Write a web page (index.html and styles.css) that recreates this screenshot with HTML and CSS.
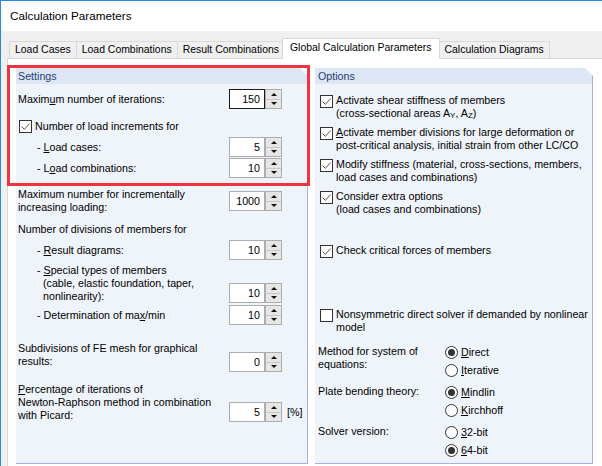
FILE: index.html
```html
<!DOCTYPE html>
<html>
<head>
<meta charset="utf-8">
<link rel="stylesheet" href="styles.css">
</head>
<body>
<div class="window">
  <div class="titlebar">Calculation Parameters</div>
  <div class="dialog">
    <div class="tabs">
      <div class="tab">Load Cases</div>
      <div class="tab">Load Combinations</div>
      <div class="tab">Result Combinations</div>
      <div class="tab active">Global Calculation Parameters</div>
      <div class="tab">Calculation Diagrams</div>
    </div>
    <div class="page">
      <section class="panel panel-settings">
        <div class="panel-head">Settings</div>
        <div class="panel-body">
          <div class="row mt5">
            <span class="label">Maxim<u>u</u>m number of iterations:</span>
            <span class="spin"><span class="spin-val focus">150</span><span class="spin-btn"><i class="up"></i><i class="down"></i></span></span>
          </div>
          <div class="check-row mt11">
            <svg class="cb" viewBox="0 0 13 13"><rect x="0.5" y="0.5" width="12" height="12" fill="#fff" stroke="#333"/><path d="M2.5 6.5l2.8 2.9 5.2-5.8" fill="none" stroke="#555" stroke-width="1"/></svg>
            <span>Number of load increments for</span>
          </div>
          <div class="row mt4">
            <span class="label sub">- <u>L</u>oad cases:</span>
            <span class="spin"><span class="spin-val">5</span><span class="spin-btn"><i class="up"></i><i class="down"></i></span></span>
          </div>
          <div class="row mt1">
            <span class="label sub">- L<u>o</u>ad combinations:</span>
            <span class="spin"><span class="spin-val">10</span><span class="spin-btn"><i class="up"></i><i class="down"></i></span></span>
          </div>
          <div class="row mt10">
            <span class="label">Maximum number for incrementally<br>increasing loading:</span>
            <span class="spin"><span class="spin-val">1000</span><span class="spin-btn"><i class="up"></i><i class="down"></i></span></span>
          </div>
          <div class="text-line mt9">Number of divisions of members for</div>
          <div class="row mt4">
            <span class="label sub">- <u>R</u>esult diagrams:</span>
            <span class="spin"><span class="spin-val">10</span><span class="spin-btn"><i class="up"></i><i class="down"></i></span></span>
          </div>
          <div class="row row-end mt4">
            <span class="label sub hang">- <u>S</u>pecial types of members<br>(cable, elastic foundation, taper,<br>nonlinearity):</span>
            <span class="spin"><span class="spin-val">10</span><span class="spin-btn"><i class="up"></i><i class="down"></i></span></span>
          </div>
          <div class="row mt2">
            <span class="label sub">- Determination of ma<u>x</u>/min</span>
            <span class="spin"><span class="spin-val">10</span><span class="spin-btn"><i class="up"></i><i class="down"></i></span></span>
          </div>
          <div class="row row-end mt17">
            <span class="label pb4">Subdivisions of FE mesh for <u>g</u>raphical<br>results:</span>
            <span class="spin"><span class="spin-val">0</span><span class="spin-btn"><i class="up"></i><i class="down"></i></span></span>
          </div>
          <div class="row row-end mt11">
            <span class="label"><u>P</u>ercentage of iterations of<br>Newton-Raphson method in combination<br>with Picard:</span>
            <span class="spin"><span class="spin-val">5</span><span class="spin-btn"><i class="up"></i><i class="down"></i></span></span>
            <span class="unit">[%]</span>
          </div>
        </div>
      </section>
      <section class="panel panel-options">
        <div class="panel-head">Options</div>
        <div class="panel-body">
          <div class="check mt10">
            <svg class="cb" viewBox="0 0 13 13"><rect x="0.5" y="0.5" width="12" height="12" fill="#fff" stroke="#333"/><path d="M2.5 6.5l2.8 2.9 5.2-5.8" fill="none" stroke="#555" stroke-width="1"/></svg>
            <span>Activate shear stiffness of members<br>(cross-sectional areas A<sub>Y</sub>, A<sub>Z</sub>)</span>
          </div>
          <div class="check mt6">
            <svg class="cb" viewBox="0 0 13 13"><rect x="0.5" y="0.5" width="12" height="12" fill="#fff" stroke="#333"/><path d="M2.5 6.5l2.8 2.9 5.2-5.8" fill="none" stroke="#555" stroke-width="1"/></svg>
            <span><u>A</u>ctivate member divisions for large deformation or<br>post-critical analysis, initial strain from other LC/CO</span>
          </div>
          <div class="check mt6">
            <svg class="cb" viewBox="0 0 13 13"><rect x="0.5" y="0.5" width="12" height="12" fill="#fff" stroke="#333"/><path d="M2.5 6.5l2.8 2.9 5.2-5.8" fill="none" stroke="#555" stroke-width="1"/></svg>
            <span>Modify stiffness (material, cross-sections, members,<br>load cases and combinations)</span>
          </div>
          <div class="check mt6">
            <svg class="cb" viewBox="0 0 13 13"><rect x="0.5" y="0.5" width="12" height="12" fill="#fff" stroke="#333"/><path d="M2.5 6.5l2.8 2.9 5.2-5.8" fill="none" stroke="#555" stroke-width="1"/></svg>
            <span>Consider extra options<br>(load cases and combinations)</span>
          </div>
          <div class="check mt28">
            <svg class="cb" viewBox="0 0 13 13"><rect x="0.5" y="0.5" width="12" height="12" fill="#fff" stroke="#333"/><path d="M2.5 6.5l2.8 2.9 5.2-5.8" fill="none" stroke="#555" stroke-width="1"/></svg>
            <span>Check critical forces of members</span>
          </div>
          <div class="check mt50">
            <svg class="cb" viewBox="0 0 13 13"><rect x="0.5" y="0.5" width="12" height="12" fill="#fff" stroke="#333"/></svg>
            <span>Nonsymmetric direct solver if demanded by nonlinear<br>model</span>
          </div>
          <div class="radio-grid mt9">
            <div class="rlabel">Method for system of<br>equations:</div>
            <div class="rstack">
              <div class="radio"><span class="rb on"></span><span><u>D</u>irect</span></div>
              <div class="radio"><span class="rb"></span><span><u>I</u>terative</span></div>
            </div>
            <div class="rlabel">Plate bending theory:</div>
            <div class="rstack">
              <div class="radio"><span class="rb on"></span><span><u>M</u>indlin</span></div>
              <div class="radio"><span class="rb"></span><span><u>K</u>irchhoff</span></div>
            </div>
            <div class="rlabel">Solver version:</div>
            <div class="rstack">
              <div class="radio"><span class="rb"></span><span><u>3</u>2-bit</span></div>
              <div class="radio"><span class="rb on"></span><span><u>6</u>4-bit</span></div>
            </div>
          </div>
        </div>
      </section>
    </div>
  </div>
  <div class="highlight"></div>
</div>
</body>
</html>
```
FILE: styles.css
```css
html, body {
  margin: 0;
  padding: 0;
}
body {
  width: 602px;
  height: 466px;
  overflow: hidden;
  background: #f0f0f0;
  font-family: "Liberation Sans", Arial, sans-serif;
  font-size: 10.7px;
  color: #000;
}
u { text-decoration: underline; text-underline-offset: 1px; }

.window {
  position: relative;
  box-sizing: border-box;
  height: 466px;
  border-top: 1px solid #2b8ade;
  border-left: 1px solid #2b8ade;
  background: #f0f0f0;
}
.titlebar {
  height: 30px;
  line-height: 29px;
  padding-left: 9px;
  background: #fff;
  font-size: 11.7px;
}
.dialog {
  padding: 7px 0 0 6px;
}
.tabs {
  position: relative;
  z-index: 1;
  display: flex;
  align-items: flex-end;
  height: 20px;
  padding-left: 2px;
  font-size: 10.45px;
}
.tab {
  box-sizing: border-box;
  height: 17px;
  line-height: 16px;
  padding: 0 5px;
  border: 1px solid #d9d9d9;
  border-bottom: none;
  margin-right: -1px;
  background: #f0f0f0;
  white-space: nowrap;
}
.tab.active {
  height: 21px;
  line-height: 18px;
  margin: 0 -1px -1px -2px;
  padding: 0 7px;
  background: #fff;
  position: relative;
  z-index: 2;
}
.page {
  display: flex;
  gap: 7px;
  height: 420px;
  padding: 9px 0 0 8px;
  background: #fff;
  border-top: 1px solid #d9d9d9;
  border-left: 1px solid #d9d9d9;
}
.panel {
  box-sizing: border-box;
  height: 396px;
  background: #eff3fa;
  border-right: 1px solid #a7b0e4;
  border-bottom: 1px solid #a7b0e4;
  clip-path: polygon(0 0, calc(100% - 8px) 0, 100% 8px, 100% 100%, 0 100%);
}
.panel-settings { width: 292px; }
.panel-options { width: 278px; }
.panel-head {
  height: 16px;
  line-height: 16px;
  padding-left: 2px;
  background: #dce6f4;
  color: #1f3f74;
}
.panel-options .panel-head { padding-left: 3px; }
.panel-body {
  padding-left: 2px;
  line-height: 13px;
}
.panel-options .panel-body { padding-left: 3px; }

.row {
  display: grid;
  grid-template-columns: 1fr 53px 25px;
  align-items: center;
}
.row-end { align-items: end; }
.label { white-space: nowrap; }
.sub { padding-left: 19px; }
.hang { padding-left: 25px; text-indent: -6px; }
.pb4 { padding-bottom: 4px; }
.unit { padding-left: 5px; line-height: 20px; }
.text-line { line-height: 13px; }

.spin {
  display: flex;
  height: 20px;
}
.spin-val {
  box-sizing: border-box;
  width: 36px;
  height: 20px;
  border: 1px solid #abadb3;
  background: #fff;
  text-align: right;
  padding-right: 4px;
  line-height: 18px;
}
.spin-val.focus { border-color: #1a1a1a; }
.spin-btn {
  box-sizing: border-box;
  width: 17px;
  height: 20px;
  display: flex;
  flex-direction: column;
  border: 1px solid #adadad;
  background: #e6e6e6;
}
.spin-btn i {
  flex: 1;
  display: flex;
  align-items: center;
  justify-content: center;
}
.spin-btn i.down { border-top: 1px solid #c8c8c8; }
.spin-btn i::after {
  content: "";
  width: 0;
  height: 0;
  border-left: 3px solid transparent;
  border-right: 3px solid transparent;
}
.spin-btn i.up::after { border-bottom: 3px solid #111; }
.spin-btn i.down::after { border-top: 3px solid #111; }

.check-row {
  display: flex;
  align-items: center;
  gap: 3px;
  height: 13px;
}
.check-row .cb { margin-left: 1px; }
.cb {
  width: 13px;
  height: 13px;
  flex: none;
  display: block;
}
.check {
  display: flex;
  align-items: flex-start;
  gap: 3px;
  white-space: nowrap;
}
.check .cb { margin: 1px 0 0 2px; }
sub {
  font-size: 8px;
  vertical-align: -1px;
  line-height: 0;
}

.radio-grid {
  display: grid;
  grid-template-columns: 127px 1fr;
  row-gap: 4px;
}
.rlabel { padding-top: 2px; line-height: 13px; }
.radio {
  display: flex;
  align-items: center;
  gap: 3px;
  height: 18px;
}
.rb {
  box-sizing: border-box;
  width: 13px;
  height: 13px;
  border: 1px solid #333;
  border-radius: 50%;
  background: #fff;
  display: flex;
  align-items: center;
  justify-content: center;
}
.rb.on::after {
  content: "";
  width: 7px;
  height: 7px;
  border-radius: 50%;
  background: #333;
}

.mt1 { margin-top: 1px; }
.mt2 { margin-top: 2px; }
.mt4 { margin-top: 4px; }
.mt5 { margin-top: 5px; }
.mt6 { margin-top: 6px; }
.mt9 { margin-top: 9px; }
.mt10 { margin-top: 10px; }
.mt11 { margin-top: 11px; }
.mt17 { margin-top: 17px; }
.mt28 { margin-top: 28px; }
.mt50 { margin-top: 50px; }

.highlight {
  position: absolute;
  left: 6px;
  top: 64px;
  width: 303px;
  height: 121px;
  box-sizing: border-box;
  border: 3px solid #ee3440;
  pointer-events: none;
}
```
